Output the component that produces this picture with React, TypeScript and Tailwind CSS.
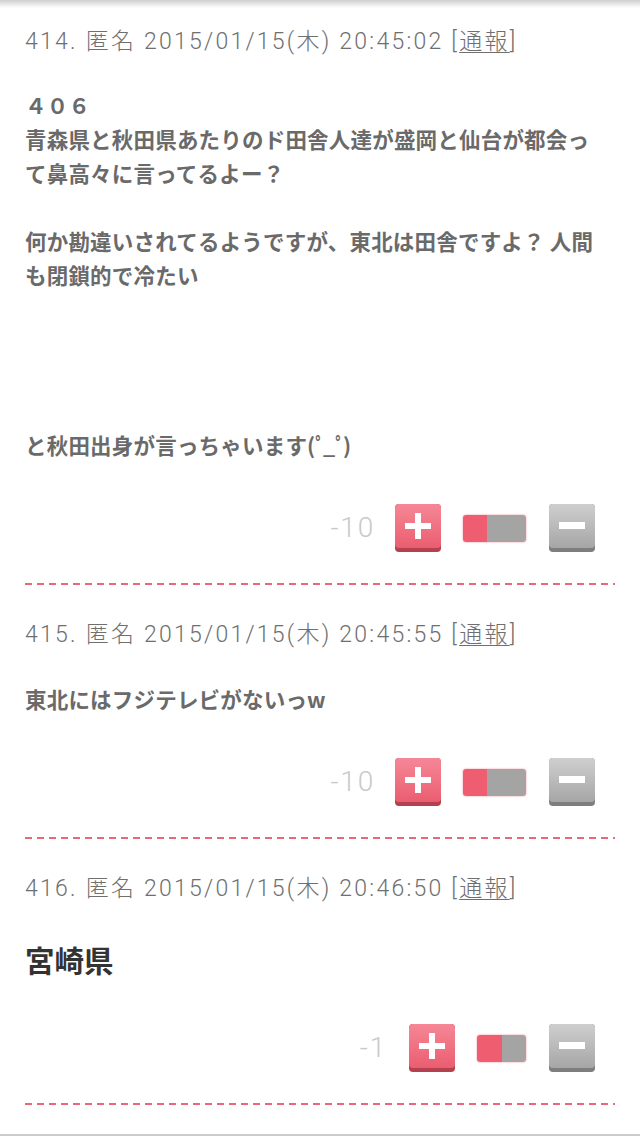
import React from "react";

const headFont = { fontFamily: "Roboto, 'Noto Sans CJK JP', sans-serif" };

function PlusBtn() {
  return (
    <div className="relative w-[46px] h-[48px] rounded-[4px] bg-[#b5404f] shrink-0">
      <div className="absolute inset-x-0 top-0 h-[44px] rounded-[4px] bg-gradient-to-b from-[#f58797] to-[#ea5d70] flex items-center justify-center">
        <svg width="26" height="26" viewBox="0 0 26 26">
          <rect x="10" y="0" width="6" height="26" fill="#fff" />
          <rect x="0" y="10" width="26" height="6" fill="#fff" />
        </svg>
      </div>
    </div>
  );
}

function MinusBtn() {
  return (
    <div className="relative w-[46px] h-[48px] rounded-[4px] bg-[#7e7e7e] shrink-0">
      <div className="absolute inset-x-0 top-0 h-[44px] rounded-[4px] bg-gradient-to-b from-[#cfcfcf] to-[#a6a6a6] flex items-center justify-center">
        <svg width="26" height="8" viewBox="0 0 26 8">
          <rect x="0" y="0" width="26" height="7" fill="#fff" />
        </svg>
      </div>
    </div>
  );
}

function Bar({ red, gray }: { red: number; gray: number }) {
  return (
    <div className="flex h-[27px] rounded-[3px] overflow-hidden shadow-[0_0_2px_#f08090] shrink-0">
      <div className="bg-[#ef5e70]" style={{ width: red }} />
      <div className="bg-[#a4a4a4]" style={{ width: gray }} />
    </div>
  );
}

function Votes({ score, red, gray, numGap }: { score: string; red: number; gray: number; numGap: number }) {
  return (
    <div className="flex items-center justify-end pr-[45px] h-[48px]">
      <span
        className="text-[28px] font-light text-[#c9c9c9] leading-none tracking-[1.8px]"
        style={{ ...headFont, marginRight: numGap }}
      >
        {score}
      </span>
      <PlusBtn />
      <div className="w-[22px]" />
      <Bar red={red} gray={gray} />
      <div className="w-[23px]" />
      <MinusBtn />
    </div>
  );
}

function Header({ n, time }: { n: string; time: string }) {
  return (
    <div
      className="h-[30px] leading-[30px] text-[23px] font-light text-[#6f6f6f] whitespace-nowrap tracking-[2.25px]"
      style={headFont}
    >
      {n}. 匿名 2015/01/15(木) {time} [<span className="underline underline-offset-[3px] decoration-1">通報</span>]
    </div>
  );
}

function Dash() {
  return (
    <div className="mx-[25px] h-[2px] bg-[repeating-linear-gradient(to_right,#e8697b_0px,#e8697b_7px,transparent_7px,transparent_12px)]" />
  );
}

const bodyCls =
  "text-[21.5px] leading-[34px] font-bold text-[#6a6a6a] tracking-[0.2px]";
const bodyFont = { fontFamily: "'Noto Sans CJK JP', sans-serif" };

export default function App() {
  return (
    <div className="w-[640px] h-[1136px] bg-white relative overflow-hidden">
      <div className="absolute top-0 inset-x-0 h-[8px] bg-gradient-to-b from-[#cfcfcf] to-white" />
      <div className="px-[25px] pt-[27px]">
        <Header n="414" time="20:45:02" />
        <div className={bodyCls + " mt-[31px]"} style={bodyFont}>
          <div>４０６</div>
          <div>青森県と秋田県あたりのド田舎人達が盛岡と仙台が都会っ</div>
          <div>て鼻高々に言ってるよー？</div>
          <div>&nbsp;</div>
          <div>何か勘違いされてるようですが、東北は田舎ですよ？ 人間</div>
          <div>も閉鎖的で冷たい</div>
          <div>&nbsp;</div>
          <div>&nbsp;</div>
          <div>&nbsp;</div>
          <div>&nbsp;</div>
          <div>
            と秋田出身が言っちゃいます<span className="tracking-[-3px]">(ﾟ_ﾟ)</span>
          </div>
        </div>
      </div>
      <div className="mt-[42px]">
        <Votes score="-10" red={24} gray={39} numGap={20} />
      </div>
      <div className="mt-[31px]">
        <Dash />
      </div>

      <div className="px-[25px] pt-[35px]">
        <Header n="415" time="20:45:55" />
        <div className={bodyCls + " mt-[32px]"} style={bodyFont}>
          <div>東北にはフジテレビがないっw</div>
        </div>
      </div>
      <div className="mt-[42px]">
        <Votes score="-10" red={24} gray={39} numGap={20} />
      </div>
      <div className="mt-[31px]">
        <Dash />
      </div>

      <div className="px-[25px] pt-[35px]">
        <Header n="416" time="20:46:50" />
        <div
          className="mt-[33px] text-[29.5px] leading-[44px] font-bold text-[#333333]"
          style={bodyFont}
        >
          宮崎県
        </div>
      </div>
      <div className="mt-[43px]">
        <Votes score="-1" red={25} gray={24} numGap={22} />
      </div>
      <div className="mt-[31px]">
        <Dash />
      </div>
      <div className="absolute bottom-0 inset-x-0 h-[2px] bg-[#cccccc]" />
    </div>
  );
}
